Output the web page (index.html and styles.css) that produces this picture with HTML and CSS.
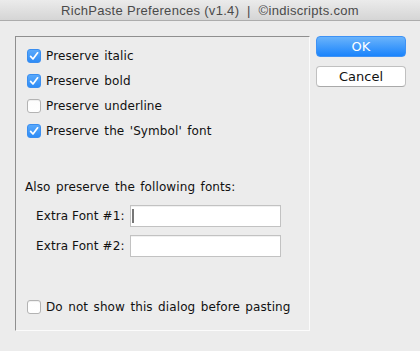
FILE: index.html
```html
<!DOCTYPE html>
<html>
<head>
<meta charset="utf-8">
<link rel="stylesheet" href="styles.css">
</head>
<body>
<div class="window">
  <div class="titlebar">RichPaste Preferences (v1.4)&nbsp; |&nbsp; ©indiscripts.com</div>
  <div class="content">
    <div class="panel">
      <div class="checks">
        <div class="row"><span class="box checked"><svg viewBox="0 0 14 14" width="14" height="14"><path d="M3.6 7.4 L6 10 L10.6 3.8" fill="none" stroke="#fff" stroke-width="1.7" stroke-linecap="round" stroke-linejoin="round"/></svg></span><span class="label">Preserve italic</span></div>
        <div class="row"><span class="box checked"><svg viewBox="0 0 14 14" width="14" height="14"><path d="M3.6 7.4 L6 10 L10.6 3.8" fill="none" stroke="#fff" stroke-width="1.7" stroke-linecap="round" stroke-linejoin="round"/></svg></span><span class="label">Preserve bold</span></div>
        <div class="row"><span class="box"></span><span class="label">Preserve underline</span></div>
        <div class="row"><span class="box checked"><svg viewBox="0 0 14 14" width="14" height="14"><path d="M3.6 7.4 L6 10 L10.6 3.8" fill="none" stroke="#fff" stroke-width="1.7" stroke-linecap="round" stroke-linejoin="round"/></svg></span><span class="label">Preserve the 'Symbol' font</span></div>
      </div>
      <div class="heading">Also preserve the following fonts:</div>
      <div class="fields">
        <div class="frow"><span class="flabel">Extra Font #1:</span><div class="field"><span class="caret"></span></div></div>
        <div class="frow"><span class="flabel">Extra Font #2:</span><div class="field"></div></div>
      </div>
      <div class="row last"><span class="box"></span><span class="label">Do not show this dialog before pasting</span></div>
    </div>
    <div class="buttons">
      <div class="btn ok">OK</div>
      <div class="btn cancel">Cancel</div>
    </div>
  </div>
</div>
</body>
</html>
```
FILE: styles.css
```css
html, body {
  margin: 0;
  padding: 0;
  background: #ececec;
}
body {
  width: 420px;
  height: 351px;
  overflow: hidden;
  font-family: "DejaVu Sans", sans-serif;
  font-size: 12px;
  color: #111;
}
.titlebar {
  height: 20px;
  border-bottom: 1px solid #acacac;
  background: linear-gradient(#ebebeb, #d5d5d5);
  font-family: "Liberation Sans", Arial, sans-serif;
  font-size: 13px;
  letter-spacing: 0.3px;
  color: #4a4a4a;
  text-align: center;
  line-height: 21px;
}
.content {
  display: flex;
  padding: 15px 0 0 15px;
  gap: 6px;
}
.panel {
  border-top: 1px solid #8f8f8f;
  border-left: 1px solid #8f8f8f;
  border-right: 1px solid #fbfbfb;
  border-bottom: 1px solid #fbfbfb;
  padding: 12px 0 0 11px;
  box-sizing: content-box;
  width: 282px;
  height: 281px;
  display: flex;
  flex-direction: column;
}
.checks {
  display: flex;
  flex-direction: column;
  gap: 11px;
}
.row {
  display: flex;
  align-items: center;
  height: 14px;
  gap: 5px;
}
.box {
  width: 12px;
  height: 12px;
  border: 1px solid #b3b3b3;
  border-radius: 3px;
  background: linear-gradient(#fdfdfd, #ffffff);
  box-shadow: inset 0 1px 0 #f0f0f0;
  flex: none;
  display: flex;
}
.box.checked {
  border-color: #3a8ef0;
  background: linear-gradient(#5aa9fb, #2e8cf6);
  box-shadow: none;
}
.box svg {
  margin: -1px;
}
.label, .heading, .flabel {
  line-height: 14px;
  white-space: nowrap;
  word-spacing: 1.5px;
  letter-spacing: 0.1px;
}
.heading {
  margin: 42px 0 0 -2px;
}
.fields {
  margin-top: 11px;
  display: flex;
  flex-direction: column;
  gap: 8px;
  padding-left: 9px;
}
.frow {
  display: flex;
  align-items: center;
  gap: 6px;
}
.flabel {
  width: 88px;
  word-spacing: 0;
}
.field {
  width: 148px;
  height: 20px;
  border: 1px solid #c2c2c2;
  background: #fff;
  box-shadow: inset 0 1px 0 #f1f1f1;
  display: flex;
  align-items: center;
  padding-left: 1px;
  box-sizing: content-box;
}
.caret {
  width: 2px;
  height: 14px;
  background: #777;
}
.row.last {
  margin-top: 43px;
}
.buttons {
  display: flex;
  flex-direction: column;
  gap: 9px;
}
.btn {
  width: 90px;
  height: 21px;
  box-sizing: border-box;
  border-radius: 4px;
  text-align: center;
  font-size: 13px;
  line-height: 20px;
}
.ok {
  background: linear-gradient(#6ab3fb, #1a84fc);
  border: 1px solid #3e92f5;
  color: #fff;
}
.cancel {
  background: #fff;
  border: 1px solid #c0c0c0;
  border-bottom-color: #a9a9a9;
  color: #111;
}
```
